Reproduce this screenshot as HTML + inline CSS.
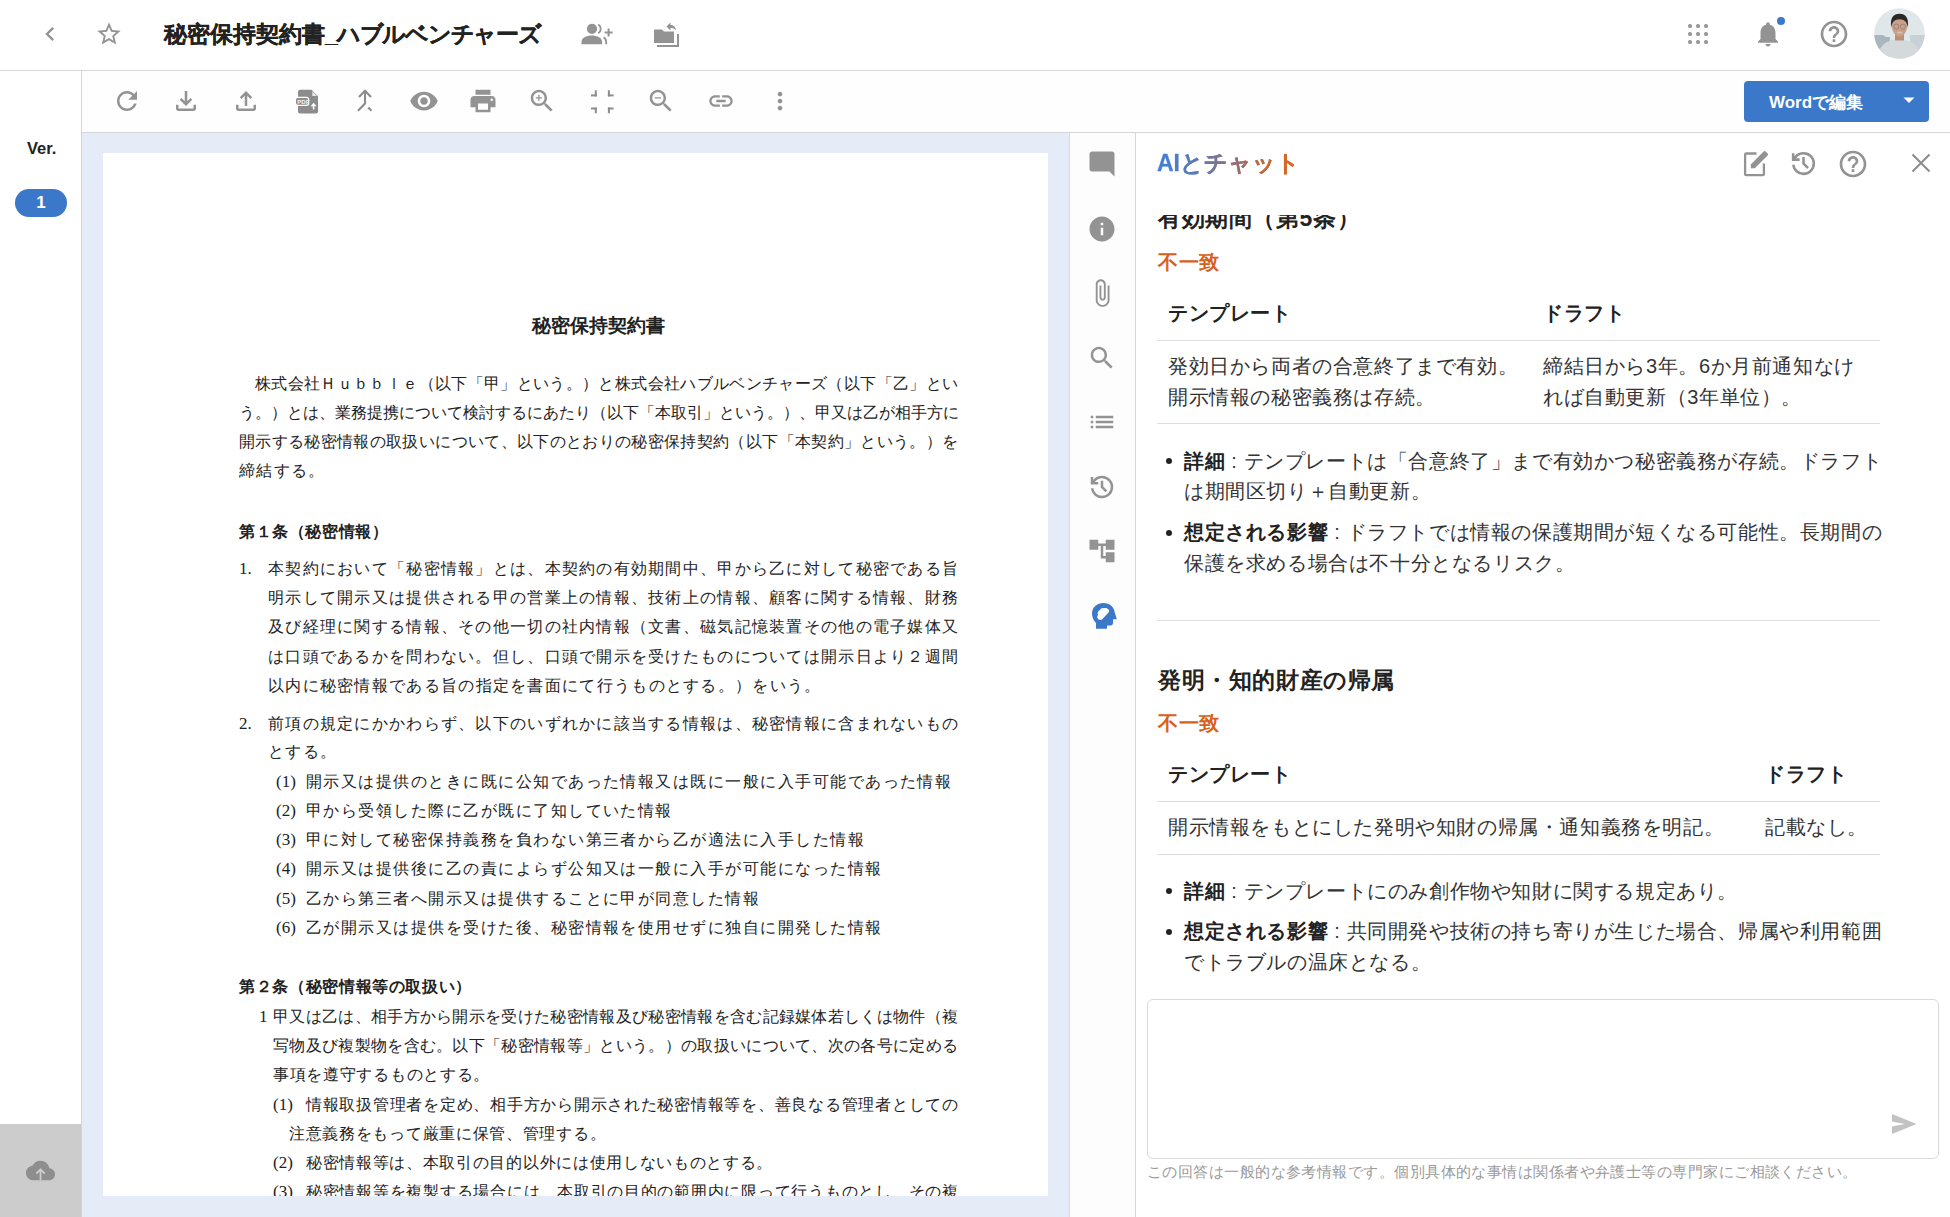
<!DOCTYPE html>
<html lang="ja">
<head>
<meta charset="utf-8">
<style>
*{box-sizing:border-box;margin:0;padding:0}
html,body{width:1950px;height:1217px;overflow:hidden;background:#fff;font-family:"Liberation Sans",sans-serif;color:#222}
.abs{position:absolute}
svg{display:block}
.ic{fill:#939393}
/* header */
#hdr{position:absolute;left:0;top:0;width:1950px;height:71px;border-bottom:1px solid #d6d6d6;background:#fff}
#title{position:absolute;left:164px;top:16px;font-size:23px;font-weight:bold;color:#222;white-space:nowrap;line-height:36px;-webkit-text-stroke:0.2px #222}
/* sidebar */
#side{position:absolute;left:0;top:71px;width:82px;height:1146px;border-right:1px solid #d4d4d4;background:#fff}
#ver{position:absolute;left:27px;top:66px;font-size:16.5px;font-weight:bold;color:#222;line-height:22px}
#pill{position:absolute;left:15px;top:118px;width:52px;height:28px;border-radius:14px;background:#3b78c9;color:#fff;font-size:17px;font-weight:bold;text-align:center;line-height:28px}
#upl{position:absolute;left:0;top:1053px;width:81px;height:93px;background:#cccccc}
/* toolbar */
#tb{position:absolute;left:82px;top:71px;width:1868px;height:62px;border-bottom:1px solid #d6d6d6;background:#fefefe}
#wbtn{position:absolute;left:1744px;top:81px;width:185px;height:41px;border-radius:4px;background:#3b78c9;color:#fff;font-size:17px;font-weight:bold}
/* doc area */
#docbg{position:absolute;left:82px;top:133px;width:987px;height:1084px;background:#e5ebf7}
#page{position:absolute;left:103px;top:153px;width:945px;height:1043px;background:#fff;overflow:hidden}
.dl{position:absolute;font-size:16px;line-height:20px;color:#222;white-space:nowrap;letter-spacing:1.3px}
.j{text-align:justify;text-align-last:justify;letter-spacing:0}
.hb{font-weight:bold;letter-spacing:0}
.lat{font-family:"Liberation Serif",serif;letter-spacing:0;font-size:17px}
/* strip */
#strip{position:absolute;left:1069px;top:133px;width:67px;height:1084px;border-left:1px solid #dadada;border-right:1px solid #d6d6d6;background:#fdfdfd}
/* chat */
#chat{position:absolute;left:1136px;top:133px;width:814px;height:1084px;background:#fff;overflow:hidden}
.ct{position:absolute;font-size:20px;line-height:31px;color:#333;white-space:nowrap;letter-spacing:0.6px}
.b{font-weight:bold;color:#222}
.org{color:#d9601b;font-weight:bold}
.hr{position:absolute;height:1px;background:#dadada}
.h2{font-size:23px}
#aititle{font-size:23px;font-weight:bold;line-height:32px;white-space:nowrap;background:linear-gradient(90deg,#3d7fd6 0%,#5b7bb8 25%,#8a6f86 50%,#c4683a 75%,#e0661a 100%);-webkit-background-clip:text;background-clip:text;color:transparent;letter-spacing:0;-webkit-text-stroke:0.3px transparent}
</style>
</head>
<body>
<!-- HEADER -->
<div id="hdr">
  <svg class="abs" style="left:36px;top:20px" width="28" height="28" viewBox="0 0 24 24"><path class="ic" d="M15.41 7.41L14 6l-6 6 6 6 1.41-1.41L10.83 12z"/></svg>
  <svg class="abs" style="left:95px;top:20px" width="28" height="28" viewBox="0 0 24 24"><path class="ic" d="M22 9.24l-7.19-.62L12 2 9.19 8.63 2 9.24l5.46 4.73L5.82 21 12 17.27 18.18 21l-1.63-7.03L22 9.24zM12 15.4l-3.76 2.27 1-4.28-3.32-2.88 4.38-.38L12 6.1l1.71 4.04 4.38.38-3.32 2.88 1 4.28L12 15.4z"/></svg>
  <div id="title">秘密保持契約書<span style="letter-spacing:-1px">_</span><span style="letter-spacing:-1.25px">ハブルベンチャーズ</span></div>
  <svg class="abs" style="left:1686px;top:22px" width="24" height="24" viewBox="0 0 24 24"><g class="ic"><circle cx="4" cy="4" r="2"/><circle cx="12" cy="4" r="2"/><circle cx="20" cy="4" r="2"/><circle cx="4" cy="12" r="2"/><circle cx="12" cy="12" r="2"/><circle cx="20" cy="12" r="2"/><circle cx="4" cy="20" r="2"/><circle cx="12" cy="20" r="2"/><circle cx="20" cy="20" r="2"/></g></svg>
  <svg class="abs" style="left:1753px;top:19px" width="30" height="30" viewBox="0 0 24 24"><path class="ic" d="M12 22c1.1 0 2-.9 2-2h-4c0 1.1.89 2 2 2zm6-6v-5c0-3.07-1.64-5.64-4.5-6.32V4c0-.83-.67-1.5-1.5-1.5s-1.5.67-1.5 1.5v.68C7.63 5.36 6 7.92 6 11v5l-2 2v1h16v-1l-2-2z"/></svg>
  <div class="abs" style="left:1777px;top:17px;width:8px;height:8px;border-radius:4px;background:#3b78c9"></div>
  <svg class="abs" style="left:1818px;top:18px" width="32" height="32" viewBox="0 0 24 24"><path class="ic" d="M11 18h2v-2h-2v2zm1-16C6.48 2 2 6.48 2 12s4.48 10 10 10 10-4.48 10-10S17.52 2 12 2zm0 18c-4.41 0-8-3.59-8-8s3.59-8 8-8 8 3.59 8 8-3.59 8-8 8zm0-14c-2.21 0-4 1.79-4 4h2c0-1.1.9-2 2-2s2 .9 2 2c0 2-3 1.75-3 5h2c0-2.25 3-2.5 3-5 0-2.21-1.79-4-4-4z"/></svg>
  <svg class="abs" style="left:1874px;top:8px" width="51" height="51" viewBox="0 0 51 51"><defs><clipPath id="avc"><circle cx="25.5" cy="25.5" r="25.3"/></clipPath></defs><g clip-path="url(#avc)"><rect width="51" height="51" fill="#dfe7ea"/><path d="M0 27h9l3 2h4v22H0z" fill="#aab6bd"/><rect x="36" y="27" width="15" height="24" fill="#c8d1d5"/><path d="M3 51C5 36 14 31.5 25 31.5S45 36 48 51z" fill="#d4d9dc"/><rect x="21" y="23" width="9" height="9.5" fill="#b98f78"/><ellipse cx="25.5" cy="18.5" rx="7.6" ry="10" fill="#c9a089"/><path d="M17.3 20C15.8 9.5 19.5 5.8 25.5 5.8S35.2 9.5 33.8 20C33.2 14 30.5 11.3 25.5 11.3S17.9 14 17.3 20z" fill="#2b2725"/><circle cx="22.3" cy="18.7" r="2.6" fill="none" stroke="#8a766b" stroke-width="0.6"/><circle cx="28.9" cy="18.7" r="2.6" fill="none" stroke="#8a766b" stroke-width="0.6"/><ellipse cx="25.5" cy="24.5" rx="2.6" ry="1" fill="#dcc0b2"/></g></svg>
  <svg class="abs" style="left:578px;top:20px" width="40" height="30" viewBox="0 0 40 30"><g fill="#939393"><circle cx="14" cy="8.8" r="5.1"/><path d="M3.5 24.2v-2.3c0-4 4.8-6.4 10.3-6.4s10.3 2.4 10.3 6.4v2.3z"/><path d="M29.6 8.5h2v3h3v2h-3v3h-2v-3h-3v-2h3z"/></g><g fill="none" stroke="#939393" stroke-width="1.8"><path d="M20.3 4.4a5.2 5.2 0 0 1 0 8.8"/><path d="M25.6 17.3c1.8 1.1 2.6 2.7 2.6 4.7v2.2"/></g></svg>
  <svg class="abs" style="left:652px;top:21px" width="30" height="28" viewBox="0 0 30 28"><g class="ic"><path d="M2 8.5h8l2 2h10v11.5H2z"/><path d="M5 24h20V13h2v13H5z"/><path d="M14.5 5.5l4-4v2.5c3 0 5 1.5 5.5 5.5-1.5-2-3-2.5-5.5-2.5v2.5z"/></g></svg>

</div>
<!-- SIDEBAR -->
<div id="side">
  <div id="ver">Ver.</div>
  <div id="pill">1</div>
  <div id="upl"><svg class="abs" style="left:26px;top:32px" width="29" height="29" viewBox="0 0 24 24"><path fill="#8e8e8e" d="M19.35 10.04C18.67 6.59 15.64 4 12 4 9.11 4 6.6 5.64 5.35 8.04 2.34 8.36 0 10.91 0 14c0 3.31 2.69 6 6 6h13c2.76 0 5-2.24 5-5 0-2.64-2.05-4.78-4.65-4.96z"/><path fill="#cfcfcf" d="M11.3 20v-7.2l-2.3 2.3-1-1 4-4 4 4-1 1-2.3-2.3V20z"/></svg></div>
</div>
<!-- TOOLBAR -->
<div id="tb"></div>
  <svg class="abs" style="left:112px;top:86px" width="30" height="30" viewBox="0 0 24 24"><path class="ic" d="M17.65 6.35C16.2 4.9 14.21 4 12 4c-4.42 0-7.99 3.58-7.99 8s3.57 8 7.99 8c3.73 0 6.84-2.55 7.73-6h-2.08c-.82 2.33-3.04 4-5.65 4-3.31 0-6-2.69-6-6s2.69-6 6-6c1.66 0 3.14.69 4.22 1.78L13 11h7V4l-2.35 2.35z"/></svg>
  <svg class="abs" style="left:171px;top:86px" width="30" height="30" viewBox="0 0 24 24"><path class="ic" d="M12 16l-5-5 1.4-1.45 2.6 2.6V4h2v8.15l2.6-2.6L17 11zm-6 4q-.825 0-1.412-.587T4 18v-3h2v3h12v-3h2v3q0 .825-.587 1.413T18 20z"/></svg>
  <svg class="abs" style="left:231px;top:86px" width="30" height="30" viewBox="0 0 24 24"><path class="ic" d="M11 16V7.85l-2.6 2.6L7 9l5-5 5 5-1.4 1.45-2.6-2.6V16zm-5 4q-.825 0-1.412-.587T4 18v-3h2v3h12v-3h2v3q0 .825-.587 1.413T18 20z"/></svg>
  <svg class="abs" style="left:290px;top:86px" width="32" height="32" viewBox="0 0 32 32"><path fill="#8c8c8c" d="M10 3.8h11.5l6.5 6.5v15.3a2 2 0 0 1-2 2H10a2 2 0 0 1-2-2V5.8a2 2 0 0 1 2-2z"/><path fill="#e6e6e6" d="M22.3 5.3v4.6h4.6z"/><rect x="5.4" y="11.3" width="13.2" height="8" rx="2.2" fill="#8c8c8c" stroke="#fff" stroke-width="1.3"/><text x="7.3" y="17.6" font-size="6" font-family="Liberation Sans" font-weight="bold" fill="#f2f2f2">PDF</text><path fill="#fff" d="M22.8 23.5v-3.3h-2.3l3.1-3.4 3.1 3.4h-2.3v3.3z"/></svg>
  <svg class="abs" style="left:350px;top:86px" width="30" height="30" viewBox="0 0 30 30"><path d="M9 11l6-6.3 6 6.3M15 4.8v12.8l-7 7.2M18.2 21.5l3.3 3.3" fill="none" stroke="#8c8c8c" stroke-width="2.1"/></svg>
  <svg class="abs" style="left:409px;top:86px" width="30" height="30" viewBox="0 0 24 24"><path class="ic" d="M12 4.5C7 4.5 2.73 7.61 1 12c1.73 4.39 6 7.5 11 7.5s9.27-3.11 11-7.5c-1.73-4.39-6-7.5-11-7.5zM12 17c-2.76 0-5-2.240-5-5s2.24-5 5-5 5 2.24 5 5-2.24 5-5 5zm0-8c-1.66 0-3 1.34-3 3s1.34 3 3 3 3-1.34 3-3-1.34-3-3-3z"/></svg>
  <svg class="abs" style="left:468px;top:86px" width="30" height="30" viewBox="0 0 24 24"><path class="ic" d="M19 8H5c-1.66 0-3 1.34-3 3v6h4v4h12v-4h4v-6c0-1.66-1.34-3-3-3zm-3 11H8v-5h8v5zm3-7c-.55 0-1-.45-1-1s.45-1 1-1 1 .45 1 1-.45 1-1 1zm-1-9H6v4h12V3z"/></svg>
  <svg class="abs" style="left:527px;top:86px" width="30" height="30" viewBox="0 0 24 24"><path class="ic" d="M15.5 14h-.79l-.28-.27C15.41 12.59 16 11.11 16 9.5 16 5.910 13.09 3 9.5 3S3 5.91 3 9.5 5.91 16 9.5 16c1.61 0 3.09-.59 4.23-1.57l.27.28v.79l5 4.99L20.49 19l-4.99-5zm-6 0C7.01 14 5 11.99 5 9.5S7.01 5 9.5 5 14 7.01 14 9.5 11.99 14 9.5 14zm2.5-4h-2v2H9v-2H7V9h2V7h1v2h2v1z"/></svg>
  <svg class="abs" style="left:588px;top:87px" width="30" height="30" viewBox="0 0 30 30"><g fill="#8c8c8c"><rect x="6.8" y="3.3" width="2" height="6.1"/><rect x="3" y="7.4" width="5.8" height="2"/><rect x="19.9" y="3.3" width="2" height="6.1"/><rect x="19.9" y="7.4" width="5.7" height="2"/><rect x="6.8" y="20.5" width="2" height="5.7"/><rect x="3" y="20.5" width="5.8" height="2"/><rect x="19.9" y="20.5" width="2" height="5.7"/><rect x="19.9" y="20.5" width="5.7" height="2"/></g></svg>
  <svg class="abs" style="left:646px;top:86px" width="30" height="30" viewBox="0 0 24 24"><path class="ic" d="M15.5 14h-.79l-.28-.27C15.41 12.59 16 11.11 16 9.5 16 5.91 13.09 3 9.5 3S3 5.91 3 9.5 5.91 16 9.5 16c1.61 0 3.09-.59 4.23-1.57l.27.28v.79l5 4.99L20.49 19l-4.99-5zm-6 0C7.01 14 5 11.99 5 9.5S7.01 5 9.5 5 14 7.01 14 9.5 11.99 14 9.5 14zM7 9h5v1H7z"/></svg>
  <svg class="abs" style="left:707px;top:87px" width="28" height="28" viewBox="0 0 24 24"><path class="ic" d="M3.9 12c0-1.71 1.39-3.1 3.1-3.1h4V7H7c-2.76 0-5 2.24-5 5s2.24 5 5 5h4v-1.9H7c-1.71 0-3.1-1.39-3.1-3.1zM8 13h8v-2H8v2zm9-6h-4v1.9h4c1.71 0 3.1 1.39 3.1 3.1s-1.39 3.1-3.1 3.1h-4V17h4c2.76 0 5-2.24 5-5s-2.24-5-5-5z"/></svg>
  <svg class="abs" style="left:766px;top:87px" width="28" height="28" viewBox="0 0 24 24"><path class="ic" d="M12 8c1.1 0 2-.9 2-2s-.9-2-2-2-2 .9-2 2 .9 2 2 2zm0 2c-1.1 0-2 .9-2 2s.9 2 2 2 2-.9 2-2-.9-2-2-2zm0 6c-1.1 0-2 .9-2 2s.9 2 2 2 2-.9 2-2-.9-2-2-2z"/></svg>

<div id="wbtn"><span class="abs" style="left:25px;top:11px;line-height:22px;white-space:nowrap">Wordで編集</span><svg class="abs" style="left:158px;top:14px" width="14" height="10" viewBox="0 0 14 10"><path d="M1.5 2.5h11L7 8z" fill="#fff"/></svg></div>
<!-- DOC -->
<div id="docbg"></div>
<div id="page">
<div class="dl hb" style="left:429px;top:162.5px;font-size:19px;">秘密保持契約書</div>
<div class="dl j" style="left:152px;top:221.0px;width:703px;">株式会社Ｈｕｂｂｌｅ（以下「甲」という。）と株式会社ハブルベンチャーズ（以下「乙」とい</div>
<div class="dl j" style="left:136px;top:250.0px;width:719px;">う。）とは、業務提携について検討するにあたり（以下「本取引」という。）、甲又は乙が相手方に</div>
<div class="dl j" style="left:136px;top:279.0px;width:719px;">開示する秘密情報の取扱いについて、以下のとおりの秘密保持契約（以下「本契約」という。）を</div>
<div class="dl" style="left:136px;top:308.0px;">締結する。</div>
<div class="dl hb" style="left:136px;top:369.0px;letter-spacing:0.6px;">第１条（秘密情報）</div>
<div class="dl lat" style="left:136px;top:405.5px;">1.</div>
<div class="dl j" style="left:165px;top:405.5px;width:690px;">本契約において「秘密情報」とは、本契約の有効期間中、甲から乙に対して秘密である旨</div>
<div class="dl j" style="left:165px;top:435.0px;width:690px;">明示して開示又は提供される甲の営業上の情報、技術上の情報、顧客に関する情報、財務</div>
<div class="dl j" style="left:165px;top:464.3px;width:690px;">及び経理に関する情報、その他一切の社内情報（文書、磁気記憶装置その他の電子媒体又</div>
<div class="dl j" style="left:165px;top:493.7px;width:690px;">は口頭であるかを問わない。但し、口頭で開示を受けたものについては開示日より２週間</div>
<div class="dl" style="left:165px;top:523.0px;">以内に秘密情報である旨の指定を書面にて行うものとする。）をいう。</div>
<div class="dl lat" style="left:136px;top:560.5px;">2.</div>
<div class="dl j" style="left:165px;top:560.5px;width:690px;">前項の規定にかかわらず、以下のいずれかに該当する情報は、秘密情報に含まれないもの</div>
<div class="dl" style="left:165px;top:589.0px;">とする。</div>
<div class="dl lat" style="left:173px;top:618.5px;">(1)</div>
<div class="dl" style="left:203px;top:618.5px;letter-spacing:1.47px;">開示又は提供のときに既に公知であった情報又は既に一般に入手可能であった情報</div>
<div class="dl lat" style="left:173px;top:647.8px;">(2)</div>
<div class="dl" style="left:203px;top:647.8px;letter-spacing:1.47px;">甲から受領した際に乙が既に了知していた情報</div>
<div class="dl lat" style="left:173px;top:677.1px;">(3)</div>
<div class="dl" style="left:203px;top:677.1px;letter-spacing:1.47px;">甲に対して秘密保持義務を負わない第三者から乙が適法に入手した情報</div>
<div class="dl lat" style="left:173px;top:706.4px;">(4)</div>
<div class="dl" style="left:203px;top:706.4px;letter-spacing:1.47px;">開示又は提供後に乙の責によらず公知又は一般に入手が可能になった情報</div>
<div class="dl lat" style="left:173px;top:735.7px;">(5)</div>
<div class="dl" style="left:203px;top:735.7px;letter-spacing:1.47px;">乙から第三者へ開示又は提供することに甲が同意した情報</div>
<div class="dl lat" style="left:173px;top:765.0px;">(6)</div>
<div class="dl" style="left:203px;top:765.0px;letter-spacing:1.47px;">乙が開示又は提供を受けた後、秘密情報を使用せずに独自に開発した情報</div>
<div class="dl hb" style="left:136px;top:823.7px;letter-spacing:0.65px;">第２条（秘密情報等の取扱い）</div>
<div class="dl lat" style="left:156px;top:853.7px;">1</div>
<div class="dl j" style="left:170px;top:853.7px;width:685px;">甲又は乙は、相手方から開示を受けた秘密情報及び秘密情報を含む記録媒体若しくは物件（複</div>
<div class="dl j" style="left:170px;top:882.8px;width:685px;">写物及び複製物を含む。以下「秘密情報等」という。）の取扱いについて、次の各号に定める</div>
<div class="dl" style="left:170px;top:912.0px;letter-spacing:0.7px;">事項を遵守するものとする。</div>
<div class="dl lat" style="left:170px;top:941.9px;">(1)</div>
<div class="dl j" style="left:203px;top:941.9px;width:652px;">情報取扱管理者を定め、相手方から開示された秘密情報等を、善良なる管理者としての</div>
<div class="dl" style="left:186px;top:970.6px;letter-spacing:0.7px;">注意義務をもって厳重に保管、管理する。</div>
<div class="dl lat" style="left:170px;top:1000.0px;">(2)</div>
<div class="dl" style="left:203px;top:1000.0px;letter-spacing:0.68px;">秘密情報等は、本取引の目的以外には使用しないものとする。</div>
<div class="dl lat" style="left:170px;top:1029.3px;">(3)</div>
<div class="dl j" style="left:203px;top:1029.3px;width:652px;">秘密情報等を複製する場合には、本取引の目的の範囲内に限って行うものとし、その複</div>
</div>
<!-- STRIP -->
<div id="strip">
<svg class="abs" style="left:17px;top:16px" width="30" height="30" viewBox="0 0 24 24"><path class="ic" d="M21.99 4c0-1.1-.89-2-1.99-2H4c-1.1 0-2 .9-2 2v12c0 1.1.9 2 2 2h14l4 4-.01-18z"/></svg>
<svg class="abs" style="left:17px;top:81px" width="30" height="30" viewBox="0 0 24 24"><path class="ic" d="M12 2C6.48 2 2 6.48 2 12s4.48 10 10 10 10-4.48 10-10S17.52 2 12 2zm1 15h-2v-6h2v6zm0-8h-2V7h2v2z"/></svg>
<svg class="abs" style="left:17px;top:145px" width="30" height="30" viewBox="0 0 24 24"><path class="ic" d="M16.5 6v11.5c0 2.21-1.79 4-4 4s-4-1.79-4-4V5c0-1.38 1.12-2.5 2.5-2.5s2.5 1.12 2.5 2.5v10.5c0 .55-.45 1-1 1s-1-.45-1-1V6H10v9.5c0 1.38 1.12 2.5 2.5 2.5s2.5-1.12 2.5-2.5V5c0-2.21-1.79-4-4-4S7 2.79 7 5v12.5c0 3.04 2.46 5.5 5.5 5.5s5.5-2.46 5.5-5.5V6h-1.5z"/></svg>
<svg class="abs" style="left:17px;top:210px" width="30" height="30" viewBox="0 0 24 24"><path class="ic" d="M15.5 14h-.79l-.28-.27C15.41 12.59 16 11.11 16 9.5 16 5.91 13.09 3 9.5 3S3 5.91 3 9.5 5.91 16 9.5 16c1.61 0 3.09-.59 4.23-1.57l.27.28v.79l5 4.99L20.49 19l-4.99-5zm-6 0C7.01 14 5 11.99 5 9.5S7.01 5 9.5 5 14 7.01 14 9.5 11.99 14 9.5 14z"/></svg>
<svg class="abs" style="left:17px;top:274px" width="30" height="30" viewBox="0 0 24 24"><path class="ic" d="M3 13h2v-2H3v2zm0 4h2v-2H3v2zm0-8h2V7H3v2zm4 4h14v-2H7v2zm0 4h14v-2H7v2zM7 7v2h14V7H7z"/></svg>
<svg class="abs" style="left:17px;top:339px" width="30" height="30" viewBox="0 0 24 24"><path class="ic" d="M12 21q-3.45 0-6.012-2.287T3.05 13H5.1q.35 2.6 2.313 4.3T12 19q2.925 0 4.963-2.037T19 12t-2.037-4.962T12 5q-1.725 0-3.225.8T6.25 8H9v2H3V4h2v2.35q1.275-1.6 3.113-2.475T12 3q1.875 0 3.513.713t2.85 1.924 1.925 2.85T21 12t-.712 3.513-1.925 2.85-2.85 1.925T12 21m2.8-4.8L11 12.4V7h2v4.6l3.2 3.2z"/></svg>
<svg class="abs" style="left:17px;top:403px" width="30" height="30" viewBox="0 0 24 24"><path class="ic" d="M22 11V3h-7v3H9V3H2v8h7V8h2v10h4v3h7v-8h-7v3h-2V8h2v3z"/></svg>
<svg class="abs" style="left:16px;top:463px" width="36" height="40" viewBox="0 0 36 40"><path fill="#3b78c9" fill-rule="evenodd" d="M10 32.8V27C7.5 24.5 6 21 6 17.5 6 11.5 11 7 17.5 7 23.5 7 28.5 11 28.8 17L30.6 22.2C30.8 22.7 30.4 23.2 29.9 23.2H27V27C27 28.5 26 29.5 24.5 29.5H21V32.8ZM12 19C11 17 12 14.5 14 14 14.5 12.5 16.5 11.5 18 12.3 19.5 11.5 21.5 12 22.5 13.5 23.5 14.5 23.2 16 22.3 16.8L16.5 23C15 24.5 12.5 24 11.6 22.3 11 21.3 11.2 20 12 19Z"/></svg>
</div>
<!-- CHAT -->
<div id="chat">
<div class="abs" id="aititle" style="left:21px;top:14px">AIとチャット</div>
<svg class="abs" style="left:606px;top:16px" width="30" height="30" viewBox="0 0 30 30"><path d="M14.5 4.5H4.3a1.2 1.2 0 0 0-1.2 1.2v19.3a1.2 1.2 0 0 0 1.2 1.2h16.4a1.2 1.2 0 0 0 1.2-1.2V14.5" fill="none" stroke="#939393" stroke-width="2.3"/><path d="M8.8 19.2v-3.8L21.6 2.6a1.5 1.5 0 0 1 2.1 0l1.9 1.9a1.5 1.5 0 0 1 0 2.1L12.8 19.2z" fill="#939393"/></svg>
<svg class="abs" style="left:652px;top:15px" width="31" height="31" viewBox="0 0 24 24"><path class="ic" d="M12 21q-3.450 0-6.012-2.287T3.05 13H5.1q.35 2.6 2.313 4.3T12 19q2.925 0 4.963-2.037T19 12t-2.037-4.962T12 5q-1.725 0-3.225.8T6.25 8H9v2H3V4h2v2.35q1.275-1.6 3.113-2.475T12 3q1.875 0 3.513.713t2.850 1.924 1.925 2.85T21 12t-.712 3.513-1.925 2.85-2.85 1.925T12 21m2.8-4.8L11 12.4V7h2v4.6l3.2 3.2z"/></svg>
<svg class="abs" style="left:701px;top:15px" width="32" height="32" viewBox="0 0 24 24"><path class="ic" d="M11 18h2v-2h-2v2zm1-16C6.48 2 2 6.48 2 12s4.48 10 10 10 10-4.48 10-10S17.52 2 12 2zm0 18c-4.41 0-8-3.59-8-8s3.59-8 8-8 8 3.590 8 8-3.59 8-8 8zm0-14c-2.21 0-4 1.79-4 4h2c0-1.1.9-2 2-2s2 .9 2 2c0 2-3 1.75-3 5h2c0-2.25 3-2.5 3-5 0-2.21-1.79-4-4-4z"/></svg>
<svg class="abs" style="left:774px;top:19px" width="22" height="22" viewBox="0 0 22 22"><path d="M2.5 2.5l17 17M19.5 2.5l-17 17" stroke="#8c8c8c" stroke-width="2" fill="none"/></svg>
<div class="abs" id="scroll" style="left:0;top:82px;width:814px;height:780px;overflow:hidden">
<div class="abs" style="left:0;top:-82px;width:814px;height:1084px">
<div class="ct b h2" style="left:22px;top:69.0px;line-height:32px;">有効期間（第5条）</div>
<div class="ct org" style="left:22px;top:114.0px;line-height:30px;">不一致</div>
<div class="ct b th" style="left:32px;top:164.5px;line-height:31px;">テンプレート</div>
<div class="ct b th" style="left:407px;top:164.5px;line-height:31px;">ドラフト</div>
<div class="hr" style="left:21px;top:207px;width:723px;background:#dcdcdc"></div>
<div class="ct" style="left:32px;top:217.5px;line-height:31px;">発効日から両者の合意終了まで有効。</div>
<div class="ct" style="left:32px;top:248.5px;line-height:31px;">開示情報の秘密義務は存続。</div>
<div class="ct" style="left:407px;top:217.5px;line-height:31px;">締結日から3年。6か月前通知なけ</div>
<div class="ct" style="left:407px;top:248.5px;line-height:31px;">れば自動更新（3年単位）。</div>
<div class="hr" style="left:21px;top:290px;width:723px;background:#dcdcdc"></div>
<div class="abs" style="left:30px;top:325px;width:6px;height:6px;border-radius:3px;background:#222"></div>
<div class="ct" style="left:48px;top:312.5px;line-height:31px;"><span class="b">詳細</span> : テンプレートは「合意終了」まで有効かつ秘密義務が存続。ドラフト</div>
<div class="ct" style="left:48px;top:343.0px;line-height:31px;">は期間区切り＋自動更新。</div>
<div class="abs" style="left:30px;top:396.5px;width:6px;height:6px;border-radius:3px;background:#222"></div>
<div class="ct" style="left:48px;top:384.0px;line-height:31px;"><span class="b">想定される影響</span> : ドラフトでは情報の保護期間が短くなる可能性。長期間の</div>
<div class="ct" style="left:48px;top:414.5px;line-height:31px;">保護を求める場合は不十分となるリスク。</div>
<div class="hr" style="left:21px;top:487px;width:723px;background:#dcdcdc"></div>
<div class="ct b h2" style="left:22px;top:531.0px;line-height:32px;">発明・知的財産の帰属</div>
<div class="ct org" style="left:22px;top:575.0px;line-height:30px;">不一致</div>
<div class="ct b th" style="left:32px;top:626.0px;line-height:31px;">テンプレート</div>
<div class="ct b th" style="left:629px;top:626.0px;line-height:31px;">ドラフト</div>
<div class="hr" style="left:21px;top:668px;width:723px;background:#dcdcdc"></div>
<div class="ct" style="left:32px;top:679.0px;line-height:31px;">開示情報をもとにした発明や知財の帰属・通知義務を明記。</div>
<div class="ct" style="left:629px;top:679.0px;line-height:31px;">記載なし。</div>
<div class="hr" style="left:21px;top:721px;width:723px;background:#dcdcdc"></div>
<div class="abs" style="left:30px;top:755px;width:6px;height:6px;border-radius:3px;background:#222"></div>
<div class="ct" style="left:48px;top:742.5px;line-height:31px;"><span class="b">詳細</span> : テンプレートにのみ創作物や知財に関する規定あり。</div>
<div class="abs" style="left:30px;top:795.5px;width:6px;height:6px;border-radius:3px;background:#222"></div>
<div class="ct" style="left:48px;top:783.0px;line-height:31px;"><span class="b">想定される影響</span> : 共同開発や技術の持ち寄りが生じた場合、帰属や利用範囲</div>
<div class="ct" style="left:48px;top:814.0px;line-height:31px;">でトラブルの温床となる。</div>
</div></div>
<div class="abs" style="left:11px;top:866px;width:792px;height:160px;border:1.5px solid #d9d9d9;border-radius:6px;background:#fff"></div>
<svg class="abs" style="left:754px;top:979px" width="28" height="24" viewBox="0 0 28 24"><path d="M2 2l24.5 10L2 22v-7.5L15 12 2 9.5z" fill="#c2c2c2"/></svg>
<div class="abs" style="left:11px;top:1028px;font-size:15px;line-height:22px;color:#9a9a9a;white-space:nowrap;letter-spacing:0.45px">この回答は一般的な参考情報です。個別具体的な事情は関係者や弁護士等の専門家にご相談ください。</div>
</div>
</body>
</html>
